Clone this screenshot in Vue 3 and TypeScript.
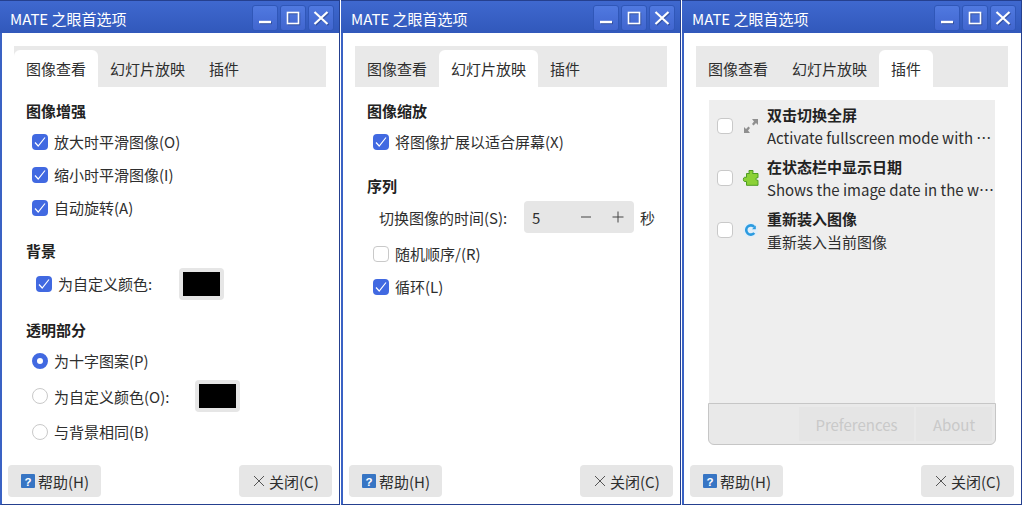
<template>
  <div class="desktop" lang="zh-CN">
    <section v-for="(win, w) in windows" :key="w" class="window">
      <header class="titlebar">
        <span class="title">MATE 之眼首选项</span>
        <div class="wm-buttons">
          <button class="wm"><svg width="24" height="24" viewBox="0 0 24 24"><path d="M6 16h12" stroke="#fff" stroke-width="2.400" /></svg></button>
          <button class="wm"><svg width="24" height="24" viewBox="0 0 24 24"><rect x="6.500" y="6.500" width="11" height="11" fill="none" stroke="#fff" stroke-width="1.600" /></svg></button>
          <button class="wm"><svg width="24" height="24" viewBox="0 0 24 24"><path d="M5.500 6l13 12M18.500 6l-13 12" stroke="#fff" stroke-width="2.200" /></svg></button>
        </div>
      </header>

      <div class="body">
        <nav class="tabs">
          <span v-for="(tab, t) in tabs" :key="tab" class="tab" :class="{ active: t === w }">{{ tab }}</span>
        </nav>

        <div v-if="w === 0" class="page">
          <h3>图像增强</h3>
          <label class="row"><span class="check on"><svg width="16" height="16" viewBox="0 0 16 16"><path d="M3 8.500l3.200 3.500L13 3.500" fill="none" stroke="#fff" stroke-width="1.200" /></svg></span>放大时平滑图像(O)</label>
          <label class="row"><span class="check on"><svg width="16" height="16" viewBox="0 0 16 16"><path d="M3 8.500l3.200 3.500L13 3.500" fill="none" stroke="#fff" stroke-width="1.200" /></svg></span>缩小时平滑图像(I)</label>
          <label class="row"><span class="check on"><svg width="16" height="16" viewBox="0 0 16 16"><path d="M3 8.500l3.200 3.500L13 3.500" fill="none" stroke="#fff" stroke-width="1.200" /></svg></span>自动旋转(A)</label>

          <h3 class="gap-bg">背景</h3>
          <label class="row custom-bg">
            <span class="check on"><svg width="16" height="16" viewBox="0 0 16 16"><path d="M3 8.500l3.200 3.500L13 3.500" fill="none" stroke="#fff" stroke-width="1.200" /></svg></span>为自定义颜色:
            <span class="swatch swatch-bg"><i></i></span>
          </label>

          <h3 class="gap-trans">透明部分</h3>
          <label class="row radio-row"><span class="radio on"></span>为十字图案(P)</label>
          <label class="row radio-row"><span class="radio"></span>为自定义颜色(O):<span class="swatch swatch-trans"><i></i></span></label>
          <label class="row radio-row"><span class="radio"></span>与背景相同(B)</label>
        </div>

        <div v-else-if="w === 1" class="page">
          <h3>图像缩放</h3>
          <label class="row"><span class="check on"><svg width="16" height="16" viewBox="0 0 16 16"><path d="M3 8.500l3.200 3.500L13 3.500" fill="none" stroke="#fff" stroke-width="1.200" /></svg></span>将图像扩展以适合屏幕(X)</label>

          <h3 class="gap-seq">序列</h3>
          <div class="spin-row">
            <span class="spin-label">切换图像的时间(S):</span>
            <div class="spin">
              <span class="spin-value">5</span>
              <span class="spin-btn"><svg width="12" height="12" viewBox="0 0 12 12"><path d="M1 6h10" stroke="#444" /></svg></span>
              <span class="spin-btn"><svg width="12" height="12" viewBox="0 0 12 12"><path d="M0.500 6h11M6 0.500v11" stroke="#444" /></svg></span>
            </div>
            <span class="unit">秒</span>
          </div>
          <label class="row"><span class="check"></span>随机顺序/(R)</label>
          <label class="row"><span class="check on"><svg width="16" height="16" viewBox="0 0 16 16"><path d="M3 8.500l3.200 3.500L13 3.500" fill="none" stroke="#fff" stroke-width="1.200" /></svg></span>循环(L)</label>
        </div>

        <div v-else class="plugin-page">
          <ul class="plugins">
            <li v-for="p in plugins" :key="p.name" class="plugin">
              <span class="check"></span>
              <span class="plugin-icon">
                <svg v-if="p.icon === 'full'" width="16" height="16" viewBox="0 0 16 16" fill="#8f8f8f">
                  <path d="M9 1h6v6l-2-2-2.500 2.500-1.500-1.500L11 3.500z" />
                  <path d="M7 15H1V9l2 2 2.500-2.500 1.500 1.500L5 12.500z" />
                </svg>
                <svg v-else-if="p.icon === 'puzzle'" width="18" height="18" viewBox="0 0 18 18">
                  <path d="M7 1.500h4v1.700l-.5 1.300h5.500v4.200h-1.300c-.9 0-.9 2.600 0 2.600H16v5H4.500v-3.800H2.500c-1.500 0-1.500-4.200 0-4.200h2V4.500h3L7 3.200z" fill="#8bd136" stroke="#4e9d22" />
                </svg>
                <svg v-else width="16" height="16" viewBox="0 0 16 16">
                  <circle cx="7.500" cy="8" r="7.500" fill="#e2eef8" />
                  <path d="M11.300 5A4.600 4.600 0 1 0 11.300 11" fill="none" stroke="#2b9be0" stroke-width="2.600" />
                  <path d="M12.800 3.400v3.800H9z" fill="#2b9be0" />
                </svg>
              </span>
              <div class="plugin-text">
                <strong>{{ p.name }}</strong>
                <span class="plugin-desc">{{ p.desc }}</span>
              </div>
            </li>
          </ul>
          <div class="plugin-toolbar">
            <span class="dim-btn prefs">Preferences</span>
            <span class="dim-btn about">About</span>
          </div>
        </div>

        <footer class="footer">
          <button class="btn">
            <svg width="14" height="14" viewBox="0 0 14 14">
              <rect width="14" height="14" rx="1" fill="#3775c4" />
              <text x="7" y="11.500" text-anchor="middle" font-size="11.500" font-weight="700" fill="#fff" font-family="Liberation Sans">?</text>
            </svg>
            帮助(H)
          </button>
          <button class="btn">
            <svg width="14" height="14" viewBox="0 0 14 14"><path d="M2 2l10 10M12 2L2 12" stroke="#555" stroke-width="1" /></svg>
            关闭(C)
          </button>
        </footer>
      </div>
    </section>
  </div>
</template>

<script setup lang="ts">
interface Plugin {
  name: string
  desc: string
  icon: 'full' | 'puzzle' | 'reload'
}

const windows = [0, 1, 2]
const tabs = ['图像查看', '幻灯片放映', '插件']

const plugins: Plugin[] = [
  { name: '双击切换全屏', desc: 'Activate fullscreen mode with …', icon: 'full' },
  { name: '在状态栏中显示日期', desc: 'Shows the image date in the w…', icon: 'puzzle' },
  { name: '重新装入图像', desc: '重新装入当前图像', icon: 'reload' }
]
</script>

<style>
html, body {
  margin: 0;
  background: #fff;
}
</style>

<style scoped>
.desktop {
  display: flex;
  gap: 1px;
  width: 1023px;
  height: 505px;
  overflow: hidden;
  font-family: "Noto Sans CJK SC", "Noto Sans", sans-serif;
  font-size: 15px;
  color: #2e2e2e;
}

.window {
  display: flex;
  flex-direction: column;
  width: 340px;
  height: 505px;
  box-sizing: border-box;
  border-left: 2px solid #3a62c4;
  border-right: 1px solid #25408f;
  border-bottom: 1px solid #25408f;
  background: #fff;
}

.titlebar {
  display: flex;
  align-items: center;
  justify-content: space-between;
  flex: none;
  height: 32px;
  margin-left: -2px;
  padding: 0 5px 0 10px;
  border-top: 1px solid #25408f;
  background: linear-gradient(#3f68cf, #3158bb);
  color: #fff;
}

.title {
  margin-top: 2px;
}

.wm-buttons {
  display: flex;
  gap: 2px;
  margin-top: 1px;
}

.wm {
  display: flex;
  align-items: center;
  justify-content: center;
  width: 26px;
  height: 26px;
  padding: 0;
  border: 1px solid #3057b8;
  border-radius: 3px;
  background: linear-gradient(#5079e0, #4166cf);
}

.wm svg {
  filter: drop-shadow(1px 1px 0 rgba(0, 0, 0, 0.25));
}

.body {
  flex: 1;
  display: flex;
  flex-direction: column;
}

.tabs {
  display: flex;
  align-items: flex-end;
  flex: none;
  height: 41px;
  margin: 13px 13px 0 12px;
  background: #e9e9e9;
}

.tab {
  display: flex;
  align-items: center;
  height: 37px;
  padding: 0 12px;
  border-radius: 6px 6px 0 0;
}

.tab.active {
  background: #fff;
}

.page {
  flex: 1;
  padding: 13px 12px 0 24px;
}

h3 {
  margin: 0;
  height: 22px;
  line-height: 22px;
  font-size: 15px;
  font-weight: 700;
  color: #222;
}

.row {
  display: flex;
  align-items: center;
  height: 33px;
  padding-left: 6px;
  gap: 6px;
}

h3 + .row {
  margin-top: 3px;
}

.check {
  flex: none;
  display: block;
  width: 16px;
  height: 16px;
  box-sizing: border-box;
  border: 1px solid #c9c9c9;
  border-radius: 4px;
  background: #fff;
}

.check.on {
  border: none;
  background: #4169e1;
}

.check svg {
  display: block;
}

.radio {
  flex: none;
  width: 16px;
  height: 16px;
  box-sizing: border-box;
  border: 1px solid #c9c9c9;
  border-radius: 50%;
  background: #fff;
}

.radio.on {
  border: 5px solid #4169e1;
}

.swatch {
  display: block;
  box-sizing: border-box;
  width: 45px;
  height: 32px;
  padding: 4px;
  border-radius: 4px;
  background: #e6e6e6;
}

.swatch i {
  display: block;
  height: 100%;
  background: #000;
}

.gap-bg {
  margin-top: 16px;
}

h3 + .custom-bg {
  margin-top: 5px;
  padding-left: 10px;
}

.swatch-bg {
  margin-left: 21px;
}

.swatch-trans {
  margin-left: 20px;
}

.gap-trans {
  margin-top: 19px;
}

.radio-row {
  height: 35.5px;
}

h3 + .radio-row {
  margin-top: 2px;
}

.gap-seq {
  margin-top: 17px;
}

.spin-row {
  display: flex;
  align-items: center;
  height: 32px;
  margin-top: 4px;
  margin-bottom: 4px;
  padding-left: 12px;
}

.spin-label {
  flex: none;
  width: 145px;
}

.spin {
  display: flex;
  align-items: center;
  width: 110px;
  height: 32px;
  border-radius: 4px;
  background: #e6e6e6;
}

.spin-value {
  width: 38px;
  padding-left: 8px;
}

.spin-btn {
  display: flex;
  align-items: center;
  justify-content: center;
  width: 32px;
}

.unit {
  margin-left: 6px;
}

.plugin-page {
  flex: 1;
  display: flex;
  flex-direction: column;
  margin: 13px 25px 20px 24px;
}

.plugins {
  flex: 1;
  margin: 0 1px;
  padding: 0;
  list-style: none;
  background: #eee;
}

.plugin {
  display: flex;
  align-items: center;
  height: 52px;
  padding-left: 8px;
}

.plugin-icon {
  display: flex;
  justify-content: center;
  width: 18px;
  margin: 0 7px 0 9px;
}

.plugin-text {
  display: flex;
  flex-direction: column;
  line-height: 23px;
}

.plugin-text strong {
  color: #222;
}

.plugin-desc {
  white-space: pre;
}

.plugin-toolbar {
  display: flex;
  justify-content: flex-end;
  gap: 2px;
  flex: none;
  height: 42px;
  box-sizing: border-box;
  padding: 3px;
  border: 1px solid #c6c6c6;
  border-radius: 0 0 6px 6px;
  background: #e9e9e9;
  color: #c9c9c9;
}

.dim-btn {
  display: flex;
  align-items: center;
  justify-content: center;
  background: #e5e5e5;
}

.prefs {
  width: 115px;
}

.about {
  width: 76px;
}

.footer {
  display: flex;
  justify-content: space-between;
  padding: 0 7px 7px 6px;
  margin-top: auto;
}

.btn {
  display: flex;
  align-items: center;
  gap: 3px;
  width: 93px;
  height: 32px;
  padding: 0 0 0 13px;
  border: none;
  border-radius: 4px;
  background: #e6e6e6;
  font: inherit;
  color: inherit;
  white-space: nowrap;
}

.btn svg {
  flex: none;
}
</style>
